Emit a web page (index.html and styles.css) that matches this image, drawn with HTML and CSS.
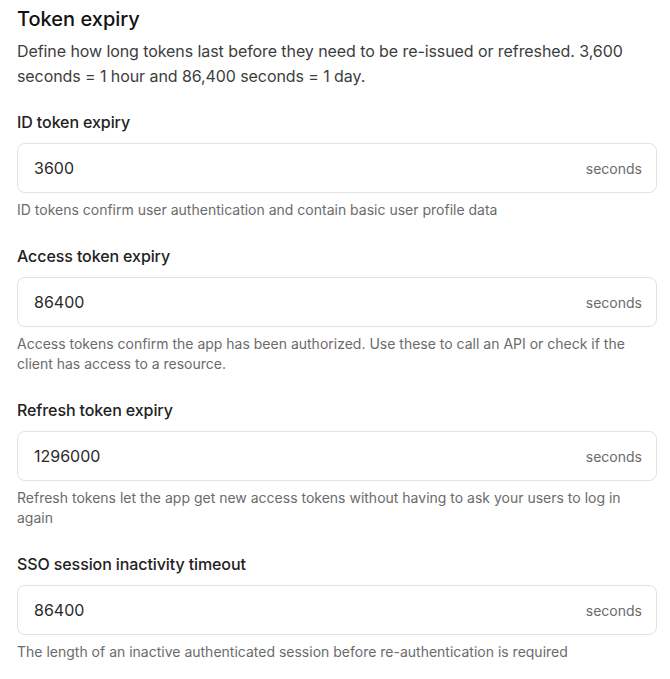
FILE: index.html
```html
<!DOCTYPE html>
<html lang="en">
<head>
<meta charset="utf-8">
<link rel="stylesheet" href="styles.css">
</head>
<body>
<section class="panel">
  <h2 class="title">Token expiry</h2>
  <p class="intro">Define how long tokens last before they need to be re-issued or refreshed. 3,600 seconds = 1 hour and 86,400 seconds = 1 day.</p>

  <div class="field">
    <label class="label">ID token expiry</label>
    <div class="input"><span class="value">3600</span><span class="unit">seconds</span></div>
    <p class="help">ID tokens confirm user authentication and contain basic user profile data</p>
  </div>

  <div class="field">
    <label class="label">Access token expiry</label>
    <div class="input"><span class="value">86400</span><span class="unit">seconds</span></div>
    <p class="help">Access tokens confirm the app has been authorized. Use these to call an API or check if the client has access to a resource.</p>
  </div>

  <div class="field">
    <label class="label">Refresh token expiry</label>
    <div class="input"><span class="value">1296000</span><span class="unit">seconds</span></div>
    <p class="help">Refresh tokens let the app get new access tokens without having to ask your users to log in again</p>
  </div>

  <div class="field">
    <label class="label">SSO session inactivity timeout</label>
    <div class="input"><span class="value">86400</span><span class="unit">seconds</span></div>
    <p class="help">The length of an inactive authenticated session before re-authentication is required</p>
  </div>
</section>
</body>
</html>
```

FILE: styles.css
```css
* { box-sizing: border-box; }
body {
  margin: 0;
  background: #ffffff;
  font-family: Inter, "Noto Sans", sans-serif;
  color: #1a1a1a;
}
.panel {
  width: 640px;
  margin-left: 17px;
  padding-top: 5px;
  display: flex;
  flex-direction: column;
}
.title {
  margin: 0;
  font-size: 20px;
  line-height: 28px;
  font-weight: 500;
  color: #111111;
}
.intro {
  margin: 6px 0 0;
  font-size: 16px;
  line-height: 25px;
  letter-spacing: -0.08px;
  color: #3d3d3d;
  padding-right: 20px;
}
.field {
  display: flex;
  flex-direction: column;
  margin-top: 24px;
}
.intro + .field {
  margin-top: 21px;
}
.label {
  font-size: 16px;
  line-height: 24px;
  font-weight: 500;
  letter-spacing: -0.1px;
  color: #222222;
}
.input {
  margin-top: 9px;
  height: 50px;
  border: 1px solid #e2e2e2;
  border-radius: 8px;
  display: flex;
  align-items: center;
  justify-content: space-between;
  padding: 0 14px 0 16px;
}
.value {
  font-size: 16px;
  color: #2a2a2a;
}
.unit {
  font-size: 14px;
  color: #6b6b6b;
}
.help {
  margin: 7px 0 0;
  font-size: 14px;
  line-height: 20px;
  color: #6b6b6b;
}
```
